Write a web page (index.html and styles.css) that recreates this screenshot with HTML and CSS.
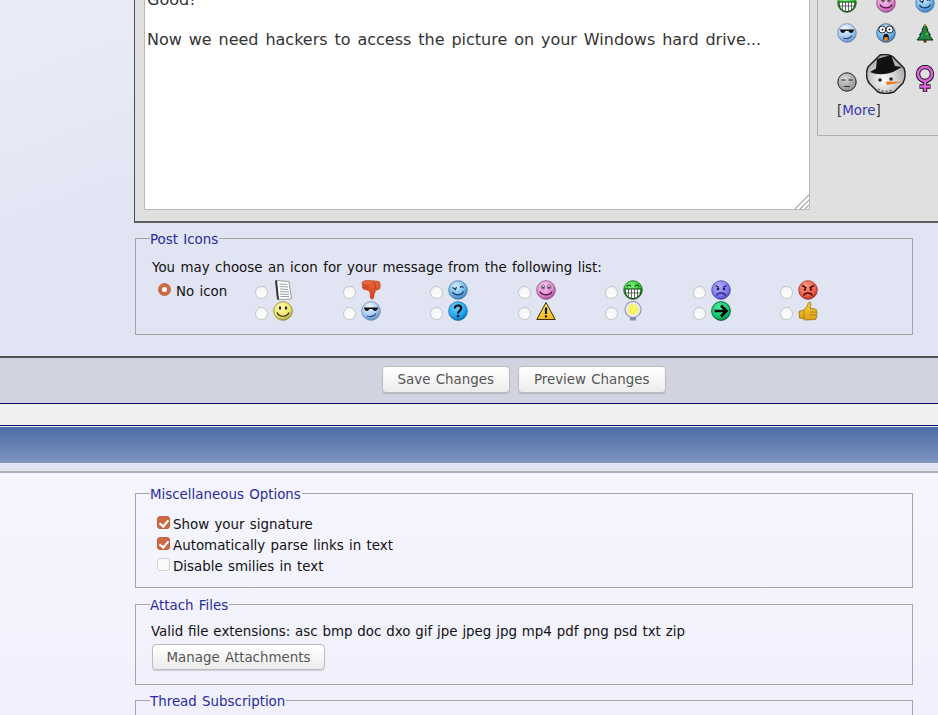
FILE: index.html
```html
<!DOCTYPE html>
<html lang="en">
<head>
    <meta charset="UTF-8">
    <meta name="viewport" content="width=device-width, initial-scale=1.0">
    <title>Edit Post</title>
    <link rel="stylesheet" href="styles.css">
</head>
<body>
    <svg class="icon-defs" xmlns="http://www.w3.org/2000/svg">
        <defs>
            <radialGradient id="g-blue" cx="40%" cy="30%" r="75%"><stop offset="0" stop-color="#d8f2ff"/><stop offset=".6" stop-color="#74b8ea"/><stop offset="1" stop-color="#3a78b8"/></radialGradient>
            <radialGradient id="g-cool" cx="40%" cy="25%" r="80%"><stop offset="0" stop-color="#f0f8ff"/><stop offset=".6" stop-color="#a8cdf2"/><stop offset="1" stop-color="#5a86c8"/></radialGradient>
            <radialGradient id="g-pink" cx="40%" cy="30%" r="75%"><stop offset="0" stop-color="#fbd0f4"/><stop offset=".6" stop-color="#e48cd4"/><stop offset="1" stop-color="#a85098"/></radialGradient>
            <radialGradient id="g-green" cx="40%" cy="30%" r="75%"><stop offset="0" stop-color="#7cf57c"/><stop offset=".7" stop-color="#2bc02b"/><stop offset="1" stop-color="#128012"/></radialGradient>
            <radialGradient id="g-purple" cx="40%" cy="30%" r="75%"><stop offset="0" stop-color="#b4b0ff"/><stop offset=".7" stop-color="#7c74ec"/><stop offset="1" stop-color="#4a42b0"/></radialGradient>
            <radialGradient id="g-red" cx="40%" cy="30%" r="75%"><stop offset="0" stop-color="#ff9a88"/><stop offset=".7" stop-color="#ec5a48"/><stop offset="1" stop-color="#b03024"/></radialGradient>
            <radialGradient id="g-yellow" cx="40%" cy="30%" r="75%"><stop offset="0" stop-color="#fffbb0"/><stop offset=".65" stop-color="#ece468"/><stop offset="1" stop-color="#a09a38"/></radialGradient>
            <radialGradient id="g-aqua" cx="40%" cy="30%" r="75%"><stop offset="0" stop-color="#70d8ff"/><stop offset=".7" stop-color="#18a0ec"/><stop offset="1" stop-color="#0a68b0"/></radialGradient>
            <radialGradient id="g-emerald" cx="40%" cy="30%" r="75%"><stop offset="0" stop-color="#50f0a0"/><stop offset=".7" stop-color="#08c468"/><stop offset="1" stop-color="#047a40"/></radialGradient>
            <radialGradient id="g-grey" cx="40%" cy="30%" r="75%"><stop offset="0" stop-color="#d8d8d8"/><stop offset="1" stop-color="#8c8c8c"/></radialGradient>
            <radialGradient id="g-snow" cx="45%" cy="65%" r="60%"><stop offset="0" stop-color="#ffffff"/><stop offset="1" stop-color="#a8a8a8"/></radialGradient>
            <linearGradient id="g-warn" x1="0" y1="0" x2="0" y2="1"><stop offset="0" stop-color="#ffe860"/><stop offset="1" stop-color="#f4b820"/></linearGradient>
            <linearGradient id="g-thumb" x1="0" y1="0" x2="0" y2="1"><stop offset="0" stop-color="#fcd040"/><stop offset="1" stop-color="#e0a018"/></linearGradient>
            <linearGradient id="g-thumbdown" x1="0" y1="0" x2="0" y2="1"><stop offset="0" stop-color="#e86840"/><stop offset="1" stop-color="#d84018"/></linearGradient>
        </defs>
        <symbol id="i-note" viewBox="0 0 20 20">
            <path d="M3 0.5 16 1.5 18.5 19 5 19.5Z" fill="#fff" stroke="#9a9a9a"/>
            <path d="M3 0.5 5 19.5" stroke="#333" stroke-width="2"/>
            <path d="M6.5 4 14 4.5M6.5 6.5 15 7M7 9 15 9.5M7 11.5 16 12M7 14 16 14.5M7.500 16.500 16 16.500" stroke="#9aa0a8"/>
        </symbol>
        <symbol id="i-down" viewBox="0 0 20 20">
            <path d="M1 2.500C3-.5 9 .5 14 1L18 1.500C19.500 3 19.500 7 18.500 9L14.500 10.500 13 14.500C13 18 12 19.500 10.500 19 8.500 18 10 14 8.500 11 6 9.500 2.500 10 1.500 8Z" fill="url(#g-thumbdown)" stroke="#a83810" stroke-width=".6"/>
            <path d="M2 5 8 5.500M2 7.500 8 8M13 2 15 9" stroke="#a83810" stroke-width=".8" fill="none"/>
        </symbol>
        <symbol id="i-wink" viewBox="0 0 20 20">
            <circle cx="10" cy="10" r="9.300" fill="url(#g-blue)" stroke="#3a6ea8" stroke-width=".7"/>
            <path d="M4.500 7.500 7.500 9.500 8.500 7M12 7.500C13 6.500 14.500 6.500 15.500 7.500" fill="none" stroke="#1a3a60" stroke-width="1.200"/>
            <path d="M4.500 12C6.500 16 13.500 16 15.500 11.500" fill="none" stroke="#1a3a60" stroke-width="1.200"/>
        </symbol>
        <symbol id="i-pink" viewBox="0 0 20 20">
            <circle cx="10" cy="10" r="9.300" fill="url(#g-pink)" stroke="#7a3a70" stroke-width=".7"/>
            <ellipse cx="7" cy="7" rx="1.800" ry="2.200" fill="#fff" stroke="#4a1a48" stroke-width=".7"/>
            <ellipse cx="13" cy="7" rx="1.800" ry="2.200" fill="#fff" stroke="#4a1a48" stroke-width=".7"/>
            <circle cx="7" cy="7.500" r=".9" fill="#222"/><circle cx="13" cy="7.500" r=".9" fill="#222"/>
            <path d="M4 11.500C6 16 14 16 16 11.500" fill="none" stroke="#4a1a48" stroke-width="1.300"/>
        </symbol>
        <symbol id="i-grin" viewBox="0 0 20 20">
            <circle cx="10" cy="10" r="9.300" fill="url(#g-green)" stroke="#0a5a0a" stroke-width=".7"/>
            <path d="M4 6.500C5 4.500 7 4.500 8 6.500M12 6.500C13 4.500 15 4.500 16 6.500" fill="none" stroke="#063a06" stroke-width="1.200"/>
            <path d="M2 9H18C18 15 15 18.500 10 18.500S2 15 2 9Z" fill="#fff" stroke="#063a06" stroke-width="1"/>
            <path d="M5.500 9V17M8.500 9V18.500M11.500 9V18.500M14.500 9V17M2.500 13H17.500" stroke="#444" stroke-width=".8"/>
        </symbol>
        <symbol id="i-frown" viewBox="0 0 20 20">
            <circle cx="10" cy="10" r="9.300" fill="url(#g-purple)" stroke="#3a3290" stroke-width=".7"/>
            <path d="M4.500 5.500 8 7.500M15.500 5.500 12 7.500" stroke="#1c1860" stroke-width="1.100"/>
            <circle cx="7" cy="9" r="1.300" fill="#1c1860"/><circle cx="13" cy="9" r="1.300" fill="#1c1860"/>
            <path d="M5.500 15.500C7.500 12 12.500 12 14.500 15.500" fill="none" stroke="#1c1860" stroke-width="1.300"/>
        </symbol>
        <symbol id="i-angry" viewBox="0 0 20 20">
            <circle cx="10" cy="10" r="9.300" fill="url(#g-red)" stroke="#8a2018" stroke-width=".7"/>
            <path d="M4 5.500 8.500 8M16 5.500 11.500 8" stroke="#401008" stroke-width="1.500"/>
            <circle cx="7" cy="9.500" r="1.200" fill="#401008"/><circle cx="13" cy="9.500" r="1.200" fill="#401008"/>
            <path d="M5.500 15.500C7.500 12 12.500 12 14.500 15.500" fill="none" stroke="#401008" stroke-width="1.500"/>
        </symbol>
        <symbol id="i-smile" viewBox="0 0 20 20">
            <circle cx="10" cy="10" r="9.300" fill="url(#g-yellow)" stroke="#807a28" stroke-width=".7"/>
            <ellipse cx="7" cy="7" rx="1.200" ry="1.700" fill="#222"/><ellipse cx="13" cy="7" rx="1.200" ry="1.700" fill="#222"/>
            <path d="M4 11.500C6 16.500 14 16.500 16 11.500" fill="none" stroke="#222" stroke-width="1.200"/>
        </symbol>
        <symbol id="i-cool" viewBox="0 0 20 20">
            <circle cx="10" cy="10" r="9.300" fill="url(#g-cool)" stroke="#5a7ab0" stroke-width=".7"/>
            <path d="M2.500 6.500H17.500L16.500 8C16 10.500 12.500 10.500 11.500 8H8.500C7.500 10.500 4 10.500 3.500 8Z" fill="#111"/>
            <path d="M6 15C9 16 13 15.500 15 12.500" fill="none" stroke="#2a4a80" stroke-width="1.100"/>
        </symbol>
        <symbol id="i-shock" viewBox="0 0 20 20">
            <circle cx="10" cy="10" r="9.300" fill="url(#g-blue)" stroke="#2a4a70" stroke-width=".7"/>
            <circle cx="6.300" cy="6.500" r="3.500" fill="#fff" stroke="#111" stroke-width=".9"/>
            <circle cx="13.700" cy="6.500" r="3.500" fill="#fff" stroke="#111" stroke-width=".9"/>
            <circle cx="6.500" cy="6.500" r="1" fill="#111"/><circle cx="13.500" cy="6.500" r="1" fill="#111"/>
            <ellipse cx="10" cy="14.500" rx="2.800" ry="3.800" fill="#111"/>
            <ellipse cx="10" cy="16" rx="2" ry="2.200" fill="#f08020"/>
        </symbol>
        <symbol id="i-tree" viewBox="0 0 20 20">
            <path d="M10 1 13 7H12L15.500 12H14L18 17H2L6 12H4.500L8 7H7Z" fill="#178a3c" stroke="#0a2a14" stroke-width="1"/>
            <rect x="8.500" y="17" width="3" height="2.500" fill="#5a3010"/>
            <circle cx="10" cy="2" r="1.200" fill="#a89040"/>
            <circle cx="9" cy="8" r=".8" fill="#e04040"/><circle cx="12" cy="11" r=".8" fill="#f0e040"/><circle cx="7" cy="13" r=".8" fill="#40a0f0"/><circle cx="13" cy="15" r=".8" fill="#e04040"/>
        </symbol>
        <symbol id="i-neutral" viewBox="0 0 20 20">
            <circle cx="10" cy="10" r="9.200" fill="url(#g-grey)" stroke="#222" stroke-width="1"/>
            <path d="M4.500 8H8.500M11.500 8H15.500" stroke="#222" stroke-width="1.200"/>
            <path d="M7 14.500H13" stroke="#333" stroke-width="1"/>
        </symbol>
        <symbol id="i-snowman" viewBox="0 0 40 40">
            <path d="M14 1C20 0 26 1 29 5L38 14C40 20 39 25 37 29L28 38C22 40 17 40 12 38L3 29C0 24 0 18 2 13Z" fill="url(#g-snow)" stroke="#222" stroke-width="1.500" stroke-linejoin="round"/>
            <path d="M4 18 10 14.500 11 5 25 1 29 12 36 13 27 18C18 21 11 21 4 18Z" fill="#111"/>
            <circle cx="14" cy="26" r="1.800" fill="#222"/><circle cx="25" cy="25" r="1.800" fill="#222"/>
            <path d="M20 27.500 36 28 21 31Z" fill="#f07818"/>
            <path d="M12 35C16 38 22 38 26 36" fill="none" stroke="#666" stroke-width="1.500" stroke-dasharray="2 2"/>
        </symbol>
        <symbol id="i-female" viewBox="0 0 20 28">
            <circle cx="10" cy="9" r="7" fill="none" stroke="#111" stroke-width="4.400"/>
            <path d="M10 15V27M4.500 21.500H15.500" stroke="#111" stroke-width="4.400"/>
            <circle cx="10" cy="9" r="7" fill="none" stroke="#e060e0" stroke-width="2.600"/>
            <path d="M10 15V26.500M5 21.500H15" stroke="#e060e0" stroke-width="2.600"/>
        </symbol>
        <symbol id="i-question" viewBox="0 0 20 20">
            <circle cx="10" cy="10" r="9.400" fill="url(#g-aqua)" stroke="#0a5a98" stroke-width=".6"/>
            <path d="M6.800 7.500C6.800 3.500 13.200 3.500 13.200 7.300 13.200 9.800 10 9.800 10 12.500" fill="none" stroke="#111" stroke-width="2.200"/>
            <rect x="8.800" y="13.800" width="2.400" height="2.400" fill="#111"/>
        </symbol>
        <symbol id="i-warn" viewBox="0 0 20 20">
            <path d="M10 1.500 19.200 18.500H.8Z" fill="url(#g-warn)" stroke="#3a3008" stroke-width="1" stroke-linejoin="round"/>
            <path d="M10 6.500V13" stroke="#111" stroke-width="2.200"/>
            <rect x="8.900" y="14.300" width="2.200" height="2.200" fill="#111"/>
        </symbol>
        <symbol id="i-bulb" viewBox="0 0 20 20">
            <circle cx="10" cy="8.500" r="8" fill="#e8e8f4" stroke="#9898b8" stroke-width="1.200"/>
            <circle cx="10" cy="8.500" r="5.500" fill="#f8f468"/>
            <rect x="7" y="16" width="6" height="3.500" rx="1" fill="#8888a8"/>
        </symbol>
        <symbol id="i-arrow" viewBox="0 0 20 20">
            <circle cx="10" cy="10" r="9.400" fill="url(#g-emerald)" stroke="#044a28" stroke-width=".8"/>
            <path d="M3.500 10H15M10 4.500 15.500 10 10 15.500" fill="none" stroke="#000" stroke-width="2.600"/>
        </symbol>
        <symbol id="i-up" viewBox="0 0 20 20">
            <path d="M1 10.500 6 9 9.500 4.500C10 1.500 11.500.5 12.500 1.500 13.500 3 12.500 5.500 12 7.500L17.500 8C19.500 9 19 17.500 17.500 18.500L7 19 5 17.500 1.500 17Z" fill="url(#g-thumb)" stroke="#8a6008" stroke-width=".7"/>
            <path d="M12 11H19M12 14H18.500M6 9.500V17.500" stroke="#a87808" stroke-width=".8" fill="none"/>
        </symbol>
    </svg>

    <div class="panel-top">
        <div class="editor">
            <div class="editor-box">
                <div class="editor-text">
                    <p>Good!</p>
                    <p>Now we need hackers to access the picture on your Windows hard drive...</p>
                </div>
                <svg class="resize-grip" viewBox="0 0 15 15"><path d="M1 15 15 1M6 15 15 6M11 15 15 11" stroke="#a8a8a8" stroke-width="1.200"/></svg>
            </div>
            <div class="smilie-box">
                <div class="smilie-grid">
                    <svg class="ico"><use href="#i-grin"/></svg>
                    <svg class="ico"><use href="#i-pink"/></svg>
                    <svg class="ico"><use href="#i-wink"/></svg>
                    <svg class="ico"><use href="#i-cool"/></svg>
                    <svg class="ico"><use href="#i-shock"/></svg>
                    <svg class="ico"><use href="#i-tree"/></svg>
                    <svg class="ico ico-low"><use href="#i-neutral"/></svg>
                    <svg class="ico-big"><use href="#i-snowman"/></svg>
                    <svg class="ico-tall"><use href="#i-female"/></svg>
                </div>
                <div class="more">[<a href="#">More</a>]</div>
            </div>
        </div>

        <fieldset class="group group-icons">
            <legend>Post Icons</legend>
            <div class="icon-hint">You may choose an icon for your message from the following list:</div>
            <div class="icon-grid">
                <label class="no-icon"><input type="radio" name="icon" checked>No icon</label>
                <label class="icon-opt"><input type="radio" name="icon"><svg class="ico"><use href="#i-note"/></svg></label>
                <label class="icon-opt"><input type="radio" name="icon"><svg class="ico"><use href="#i-down"/></svg></label>
                <label class="icon-opt"><input type="radio" name="icon"><svg class="ico"><use href="#i-wink"/></svg></label>
                <label class="icon-opt"><input type="radio" name="icon"><svg class="ico"><use href="#i-pink"/></svg></label>
                <label class="icon-opt"><input type="radio" name="icon"><svg class="ico"><use href="#i-grin"/></svg></label>
                <label class="icon-opt"><input type="radio" name="icon"><svg class="ico"><use href="#i-frown"/></svg></label>
                <label class="icon-opt"><input type="radio" name="icon"><svg class="ico"><use href="#i-angry"/></svg></label>
                <span></span>
                <label class="icon-opt"><input type="radio" name="icon"><svg class="ico"><use href="#i-smile"/></svg></label>
                <label class="icon-opt"><input type="radio" name="icon"><svg class="ico"><use href="#i-cool"/></svg></label>
                <label class="icon-opt"><input type="radio" name="icon"><svg class="ico"><use href="#i-question"/></svg></label>
                <label class="icon-opt"><input type="radio" name="icon"><svg class="ico"><use href="#i-warn"/></svg></label>
                <label class="icon-opt"><input type="radio" name="icon"><svg class="ico"><use href="#i-bulb"/></svg></label>
                <label class="icon-opt"><input type="radio" name="icon"><svg class="ico"><use href="#i-arrow"/></svg></label>
                <label class="icon-opt"><input type="radio" name="icon"><svg class="ico"><use href="#i-up"/></svg></label>
            </div>
        </fieldset>
    </div>

    <div class="submit-bar">
        <button class="btn">Save Changes</button>
        <button class="btn">Preview Changes</button>
    </div>
    <div class="spacer"></div>
    <div class="blue-head"></div>

    <div class="panel-bottom">
        <fieldset class="group group-misc">
            <legend>Miscellaneous Options</legend>
            <label class="check"><input type="checkbox" checked>Show your signature</label>
            <label class="check"><input type="checkbox" checked>Automatically parse links in text</label>
            <label class="check"><input type="checkbox">Disable smilies in text</label>
        </fieldset>
        <fieldset class="group group-attach">
            <legend>Attach Files</legend>
            <div class="ext-list">Valid file extensions: asc bmp doc dxo gif jpe jpeg jpg mp4 pdf png psd txt zip</div>
            <button class="btn btn-attach">Manage Attachments</button>
        </fieldset>
        <fieldset class="group group-sub">
            <legend>Thread Subscription</legend>
        </fieldset>
    </div>
</body>
</html>
```

FILE: styles.css
```css
*{
    margin: 0;
    padding: 0;
    box-sizing: border-box;
}

body{
    font-family: "DejaVu Sans", Verdana, sans-serif;
    font-size: 13.4px;
    word-spacing: 1px;
    color: #111;
    height: 715px;
    overflow: hidden;
    background: #f2f3fd;
}

.icon-defs{
    display: block;
    width: 0;
    height: 0;
}

.ico{
    display: block;
    width: 20px;
    height: 20px;
}

/* top part, textarea and post icons */
.panel-top{
    height: 358px;
    background: linear-gradient(160deg, #eaedf9, #e1e4f2 40%);
    border-bottom: 2px solid #505050;
}

.editor{
    display: flex;
    height: 223px;
    margin-left: 134px;
    padding: 0 0 11px 9px;
    background: #e0e0e0;
    border-left: 1px solid #505050;
    border-bottom: 2px solid #606060;
}

.editor-box{
    position: relative;
    flex: none;
    width: 666px;
    padding: 0 2px;
    overflow: hidden;
    background: #fff;
    color: #333;
    font-size: 16px;
    word-spacing: 1.8px;
    line-height: 20px;
    border-left: 1px solid #b8b8b8;
    border-right: 1px solid #b8b8b8;
    border-bottom: 1px solid #b8b8b8;
}

.editor-text{
    margin-top: -10px;
}

.editor-text p{
    margin-bottom: 20px;
}

.resize-grip{
    position: absolute;
    right: 0;
    bottom: 0;
    width: 15px;
    height: 15px;
}

.smilie-box{
    flex: none;
    width: 130px;
    height: 136px;
    margin-left: 7px;
    padding-left: 19px;
    overflow: hidden;
    border-left: 1px solid #b0b0b0;
    border-bottom: 1px solid #b0b0b0;
}

.smilie-grid{
    display: grid;
    grid-template-columns: repeat(3, 39px);
    grid-template-rows: 20px 20px 42px;
    row-gap: 10px;
    justify-items: center;
    align-items: center;
    margin-top: -7px;
    margin-left: -10px;
}

.ico-low{
    margin-top: 15px;
}

.ico-big{
    display: block;
    width: 40px;
    height: 40px;
}

.ico-tall{
    display: block;
    width: 20px;
    height: 28px;
    margin-top: 10px;
}

.more{
    margin-top: 8px;
    color: #333;
}

.more a{
    color: #3a3ab0;
    text-decoration: none;
}

/* fieldsets */
.group{
    width: 778px;
    margin-left: 135px;
    border: 1px solid #a4a4a4;
    padding: 0 16px;
}

.group legend{
    margin-left: -2px;
    padding: 3px 1px 0 0;
    color: #2a2aa0;
    line-height: 17px;
}

.group-icons{
    margin-top: 5px;
    height: 107px;
}

.icon-hint{
    margin-top: 11px;
    line-height: 17px;
    word-spacing: 1.15px;
}

.icon-grid{
    display: grid;
    grid-template-columns: 100px repeat(7, 87.5px);
    grid-auto-rows: 21px;
    margin-top: 3px;
}

.no-icon{
    display: flex;
    align-items: center;
    gap: 5px;
    padding: 4px 0 0 6px;
}

.icon-opt{
    display: flex;
    align-items: center;
    gap: 5px;
    padding-left: 3px;
}

input[type=radio]{
    appearance: none;
    width: 13px;
    height: 13px;
    flex: none;
    margin-top: 5px;
    border: 1px solid #c4c4c4;
    border-radius: 50%;
    background: linear-gradient(#f4f4f4, #fff);
}

input[type=radio]:checked{
    margin-top: -4px;
    border: 4px solid #cc6a44;
    background: #fff;
}

/* submit bar */
.submit-bar{
    display: flex;
    justify-content: center;
    gap: 8px;
    height: 46px;
    padding: 8px 26px 0 135px;
    background: #d1d3e0;
    border-bottom: 1px solid #0a0a70;
}

.btn{
    height: 27px;
    padding: 0 15px;
    font: inherit;
    word-spacing: inherit;
    color: #555;
    background: linear-gradient(#fff, #ececec);
    border: 1px solid #bcbcbc;
    border-radius: 4px;
    box-shadow: 0 1px 1px rgba(0, 0, 0, .15);
}

.spacer{
    height: 22px;
    background: #f0f0f0;
    border-bottom: 1px solid #0a0a70;
}

.blue-head{
    height: 38px;
    background: linear-gradient(#4c6ca6, #7e94bd);
    border-top: 1px solid #e8e8f4;
    border-bottom: 1px solid #e8e8f4;
}

.panel-bottom{
    background: linear-gradient(#f5f5ff, #f0f1fc);
    height: 251px;
    border-top: 7px solid #e0e3f1;
    box-shadow: inset 0 2px 0 #b0b0b0;
}

.group-misc{
    height: 105px;
    margin-top: 12px;
}

.check{
    display: flex;
    align-items: center;
    height: 21px;
    padding-left: 5px;
}

.group-misc legend{
    margin-bottom: 11px;
}

input[type=checkbox]{
    appearance: none;
    position: relative;
    width: 13px;
    height: 13px;
    margin-right: 3px;
    margin-top: -5px;
    border: 1px solid #d0d0d0;
    border-radius: 3px;
    background: #fafafa;
}

input[type=checkbox]:checked{
    background: #cc6a44;
    border-color: #c06040;
}

input[type=checkbox]:checked::after{
    content: "";
    position: absolute;
    left: 3px;
    top: 1px;
    width: 4px;
    height: 7px;
    border: solid #fff;
    border-width: 0 2px 2px 0;
    transform: rotate(40deg);
}

.group-attach{
    height: 91px;
    margin-top: 6px;
}

.ext-list{
    margin: 9px 0 0 -1px;
    line-height: 17px;
    word-spacing: .6px;
}

.btn-attach{
    margin-top: 4px;
    height: 26px;
    width: 173px;
    padding: 0;
}

.group-sub{
    height: 60px;
    margin-top: 5px;
}
```
